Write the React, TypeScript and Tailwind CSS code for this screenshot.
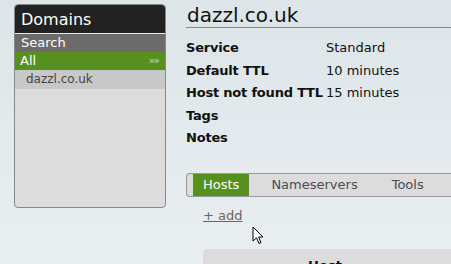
import React from "react";

export default function App() {
  const font = { fontFamily: '"DejaVu Sans", Verdana, sans-serif' };
  return (
    <div
      className="relative w-[451px] h-[264px] overflow-hidden bg-gradient-to-b from-[#dde5e8] to-[#e9eef0] flex"
      style={font}
    >
      {/* Sidebar */}
      <div className="ml-[14px] mt-[4px] w-[152px] h-[204px] shrink-0 border border-[#888] rounded-[4px] bg-[#dcdcdc] overflow-hidden flex flex-col">
        <div className="h-[28px] bg-[#222] text-white text-[16px] leading-[29px] pl-[6px] rounded-t-[3px]">
          Domains
        </div>
        <div className="h-px bg-[#e8e8e8]" />
        <div className="h-[18px] bg-[#6b6b6b] text-white text-[13px] leading-[18px] pl-[6px]">Search</div>
        <div className="h-[18px] bg-[#58901f] text-white text-[13px] leading-[18px] pl-[5px] pr-[6px] flex justify-between">
          <span>All</span>
          <span className="text-[10px] text-[#c6dcae] tracking-[-1px]">»»</span>
        </div>
        <div className="h-[19px] bg-[#c8c8c8] text-[#444] text-[12px] leading-[19px] pl-[11px]">dazzl.co.uk</div>
      </div>

      {/* Main */}
      <div className="ml-[20px] flex-1 flex flex-col">
        <div className="mt-[3px] h-[26px] text-[20px] leading-[24px] text-[#111] border-b border-[#888] pl-px">
          dazzl.co.uk
        </div>
        <div className="mt-[9px] flex flex-col text-[13px] text-[#111]">
          {[
            ["Service", "Standard"],
            ["Default TTL", "10 minutes"],
            ["Host not found TTL", "15 minutes"],
            ["Tags", ""],
            ["Notes", ""],
          ].map(([k, v]) => (
            <div key={k} className="flex h-[22.5px] leading-[22px]">
              <span className="w-[140px] shrink-0 font-bold text-[13px] whitespace-nowrap tracking-[-0.2px]">{k}</span>
              <span className="whitespace-nowrap">{v}</span>
            </div>
          ))}
        </div>

        <div className="mt-[23px] h-[24px] border border-r-0 border-[#999] rounded-l-[4px] bg-[#dcdcdc] flex items-stretch text-[13px] pl-[6px]">
          <div className="bg-[#58901f] text-white px-[10px] leading-[22px]">Hosts</div>
          <div className="ml-[22px] text-[#4a4a55] leading-[22px]">Nameservers</div>
          <div className="ml-[34px] text-[#4a4a55] leading-[22px]">Tools</div>
        </div>

        <div className="mt-[10px] ml-[17px] text-[13px] text-[#666] underline leading-[18px]">+ add</div>

        <div className="mt-[24px] ml-[17px] h-[40px] bg-[#dcdcdc] rounded-tl-[4px] flex justify-center pt-[7px]">
          <span className="text-[13px] font-bold text-[#111] ml-[-4px]">Host</span>
        </div>
      </div>

      {/* Mouse cursor */}
      <svg className="absolute left-[252px] top-[226px]" width="14" height="20" viewBox="0 0 14 20">
        <path d="M1 1 L1 15 L4.5 11.8 L7 17.5 L9 16.6 L6.6 11 L11 11 Z" fill="#fff" stroke="#000" strokeWidth="1" strokeLinejoin="round" />
      </svg>
    </div>
  );
}
